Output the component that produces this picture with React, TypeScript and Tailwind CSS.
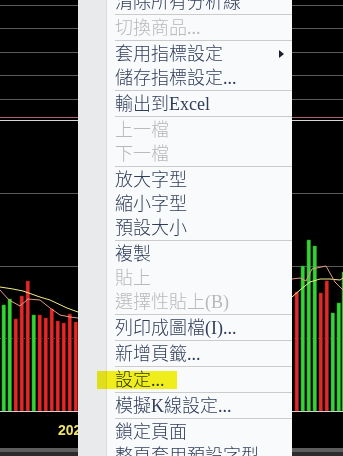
import React from "react";

type Item = { label: string; disabled?: boolean; arrow?: boolean } | "sep";

const items: Item[] = [
  { label: "清除所有分析線" },
  "sep",
  { label: "切換商品...", disabled: true },
  "sep",
  { label: "套用指標設定", arrow: true },
  { label: "儲存指標設定..." },
  "sep",
  { label: "輸出到Excel" },
  "sep",
  { label: "上一檔", disabled: true },
  { label: "下一檔", disabled: true },
  "sep",
  { label: "放大字型" },
  { label: "縮小字型" },
  { label: "預設大小" },
  "sep",
  { label: "複製" },
  { label: "貼上", disabled: true },
  { label: "選擇性貼上(B)", disabled: true },
  "sep",
  { label: "列印成圖檔(I)..." },
  "sep",
  { label: "新增頁籤..." },
  "sep",
  { label: "設定..." },
  "sep",
  { label: "模擬K線設定..." },
  "sep",
  { label: "鎖定頁面" },
  { label: "整頁套用預設字型" },
];

const leftBars: [number, number, "r" | "g"][] = [
  [2, 305, "g"],
  [8, 299, "g"],
  [14, 319, "r"],
  [20, 296, "r"],
  [26, 281, "r"],
  [32, 315, "g"],
  [38, 315, "r"],
  [44, 318, "r"],
  [50, 309, "r"],
  [56, 321, "r"],
  [62, 323, "r"],
  [68, 314, "r"],
  [74, 322, "r"],
];

const rightBars: [number, number, "r" | "g"][] = [
  [295, 292, "r"],
  [301, 266, "g"],
  [307, 240, "g"],
  [313, 246, "g"],
  [319, 293, "r"],
  [325, 281, "r"],
  [331, 313, "g"],
  [337, 303, "g"],
  [342, 272, "g"],
];

function Chart() {
  const grid = [5, 28, 52, 75, 99, 193, 266];
  const bar = (b: [number, number, "r" | "g"], i: number) => (
    <rect
      key={i}
      x={b[0]}
      y={b[1]}
      width={3.5}
      height={411 - b[1]}
      fill={b[2] === "r" ? "#e02a2a" : "#36d336"}
      stroke={b[2] === "r" ? "#9c1414" : "#1f9a1f"}
      strokeWidth={0.5}
    />
  );
  return (
    <svg width={343} height={456} className="absolute left-0 top-0">
      <rect x={0} y={0} width={343} height={456} fill="#000" />
      {grid.map((y) => (
        <line key={y} x1={0} x2={343} y1={y + 0.5} y2={y + 0.5} stroke="#5a5a5a" strokeWidth={1} />
      ))}
      <line x1={0} x2={343} y1={117.5} y2={117.5} stroke="#b45a7c" strokeWidth={1} />
      <line x1={0} x2={343} y1={120.5} y2={120.5} stroke="#d6d6d6" strokeWidth={1} />
      <line x1={0} x2={343} y1={338.5} y2={338.5} stroke="#4a4a4a" strokeWidth={1} strokeDasharray="1 2" />
      {leftBars.map(bar)}
      {rightBars.map(bar)}
      <line x1={0} x2={343} y1={411.5} y2={411.5} stroke="#cfcfcf" strokeWidth={1} />
      <polyline
        points="0,287 13,289 23,291 40,297 50,300 67,308 78,312"
        fill="none"
        stroke="#f2ee86"
        strokeWidth={1}
      />
      <polyline
        points="0,290 9,300 20,306 28,299 40,300 50,308 60,315 70,317 78,318"
        fill="none"
        stroke="#e59a84"
        strokeWidth={1}
      />
      <polyline
        points="292,297 300,290 310,282 320,279 330,279 340,280 343,278"
        fill="none"
        stroke="#f2ee86"
        strokeWidth={1}
      />
      <polyline
        points="292,279 300,278 306,281 312,269 326,266 335,282 343,290"
        fill="none"
        stroke="#e59a84"
        strokeWidth={1}
      />
      <text
        x={58}
        y={435}
        fill="#efe46a"
        fontSize={14}
        fontWeight="bold"
        fontFamily="'Liberation Sans', Arial, sans-serif"
      >
        2023/01
      </text>
      <rect x={0} y={448} width={343} height={4} fill="#5e5e5e" />
      <rect x={0} y={452} width={343} height={4} fill="#2c2c2c" />
    </svg>
  );
}

function Menu() {
  return (
    <div className="absolute left-[78px] top-[-10px] w-[214px] flex bg-[#f9fafb]">
      <div className="w-[29px] shrink-0 bg-[#e8eaeb] border-r border-[#d9dcde]" />
      <div className="flex-1 flex flex-col">
        {items.map((it, i) =>
          it === "sep" ? (
            <div key={i} className="ml-[8px] h-[2px] border-t border-[#cbcbcb]" />
          ) : (
            <div
              key={i}
              className={`relative h-[24px] pl-[8px] flex items-center whitespace-nowrap text-[18px] leading-[24px] ${
                it.disabled ? "text-[#b8b8b8]" : "text-[#2f3c5a]"
              }`}
              style={{ fontFamily: "'Liberation Serif', 'Noto Sans CJK TC', serif" }}
            >
              <span className="font-light">{it.label}</span>
              {it.arrow && (
                <svg width={5} height={8} viewBox="0 0 5 8" className="absolute right-[8px] top-[8px]">
                  <path d="M0 0 L5 4 L0 8 Z" fill="#1b1f2e" />
                </svg>
              )}
            </div>
          )
        )}
      </div>
    </div>
  );
}

export default function App() {
  return (
    <div className="relative w-[343px] h-[456px] overflow-hidden bg-black">
      <Chart />
      <Menu />
      <div className="absolute left-[97px] top-[371px] w-[80px] h-[18px] bg-[#f6f21c] mix-blend-multiply" />
    </div>
  );
}
